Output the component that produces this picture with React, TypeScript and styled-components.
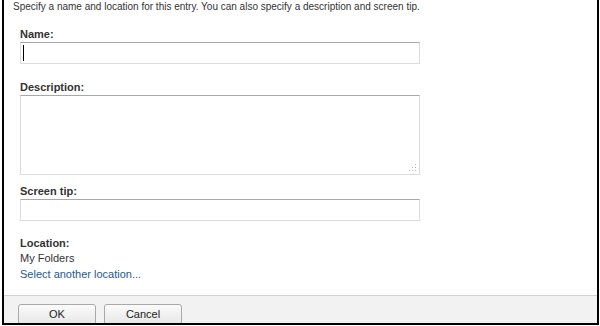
import styled, { createGlobalStyle } from "styled-components";

const GlobalStyle = createGlobalStyle`
  html, body {
    margin: 0;
    padding: 0;
    background: #ffffff;
  }
  body {
    font-family: "Liberation Sans", Arial, sans-serif;
    font-size: 11px;
    color: #333333;
  }
`;

const App = () => {
  return (
    <>
      <GlobalStyle />
      <Frame>
        <Body>
          <Intro>
            Specify a name and location for this entry. You can also specify a
            description and screen tip.
          </Intro>
          <Form>
            <Label htmlFor="entry-name" $top={13}>
              Name:
            </Label>
            <FieldWrap>
              <TextInput id="entry-name" type="text" />
              <Caret />
            </FieldWrap>

            <Label htmlFor="entry-desc" $top={16}>
              Description:
            </Label>
            <FieldWrap>
              <TextArea id="entry-desc" />
              <Grip width="8" height="8" viewBox="0 0 8 8">
                <rect x="6" y="0" width="1" height="1" fill="#b8b8b8" />
                <rect x="6" y="3" width="1" height="1" fill="#b8b8b8" />
                <rect x="3" y="3" width="1" height="1" fill="#b8b8b8" />
                <rect x="6" y="6" width="1" height="1" fill="#b8b8b8" />
                <rect x="3" y="6" width="1" height="1" fill="#b8b8b8" />
                <rect x="0" y="6" width="1" height="1" fill="#b8b8b8" />
              </Grip>
            </FieldWrap>

            <Label htmlFor="entry-tip" $top={9}>
              Screen tip:
            </Label>
            <FieldWrap>
              <TextInput id="entry-tip" type="text" />
            </FieldWrap>

            <Label as="div" $top={15}>
              Location:
            </Label>
            <Value>My Folders</Value>
            <Link href="#">Select another location...</Link>
          </Form>
        </Body>
        <Footer>
          <Button type="button">OK</Button>
          <Button type="button">Cancel</Button>
        </Footer>
      </Frame>
    </>
  );
};

export default App;

const Frame = styled.div`
  box-sizing: border-box;
  margin-left: 2px;
  width: 597px;
  height: 325px;
  border-left: 2px solid #000000;
  border-right: 2px solid #000000;
  border-bottom: 2px solid #000000;
  display: flex;
  flex-direction: column;
  overflow: hidden;
  background: #ffffff;
`;

const Body = styled.div`
  flex: 1;
  display: flex;
  flex-direction: column;
`;

const Intro = styled.p`
  margin: 0;
  padding-left: 9px;
  line-height: 14px;
  font-size: 10px;
  color: #333333;
`;

const Form = styled.div`
  display: flex;
  flex-direction: column;
  padding-left: 16px;
  width: 400px;
`;

const Label = styled.label<{ $top: number }>`
  display: block;
  margin-top: ${(p) => p.$top}px;
  margin-bottom: 1px;
  line-height: 14px;
  font-weight: bold;
  color: #333333;
`;

const FieldWrap = styled.div`
  position: relative;
  display: flex;
`;

const fieldBorder = `
  box-sizing: border-box;
  width: 400px;
  margin: 0;
  border: 1px solid #dcdcdc;
  border-top-color: #a8a8a8;
  background: #ffffff;
  outline: none;
  font-family: "Liberation Sans", Arial, sans-serif;
  font-size: 11px;
  color: #333333;
`;

const TextInput = styled.input`
  ${fieldBorder}
  height: 22px;
  padding: 2px 4px;
`;

const TextArea = styled.textarea`
  ${fieldBorder}
  height: 80px;
  padding: 3px 4px;
  resize: none;
`;

const Caret = styled.span`
  position: absolute;
  left: 3px;
  top: 3px;
  width: 1px;
  height: 16px;
  background: #000000;
`;

const Grip = styled.svg`
  position: absolute;
  right: 3px;
  bottom: 3px;
`;

const Value = styled.div`
  line-height: 14px;
  color: #333333;
`;

const Link = styled.a`
  margin-top: 2px;
  line-height: 14px;
  color: #1b5a96;
  text-decoration: none;
  align-self: flex-start;
`;

const Footer = styled.div`
  box-sizing: border-box;
  height: 28px;
  flex: none;
  display: flex;
  gap: 8px;
  padding: 8px 0 0 14px;
  border-top: 1px solid #d2d2d2;
  background: #f2f2f2;
`;

const Button = styled.button`
  box-sizing: border-box;
  width: 78px;
  height: 24px;
  flex: none;
  border: 1px solid #a9a9a9;
  border-radius: 3px;
  background: linear-gradient(#fbfbfb, #e4e4e4);
  font-family: "Liberation Sans", Arial, sans-serif;
  font-size: 11px;
  color: #222222;
  padding: 0 0 4px;
`;
